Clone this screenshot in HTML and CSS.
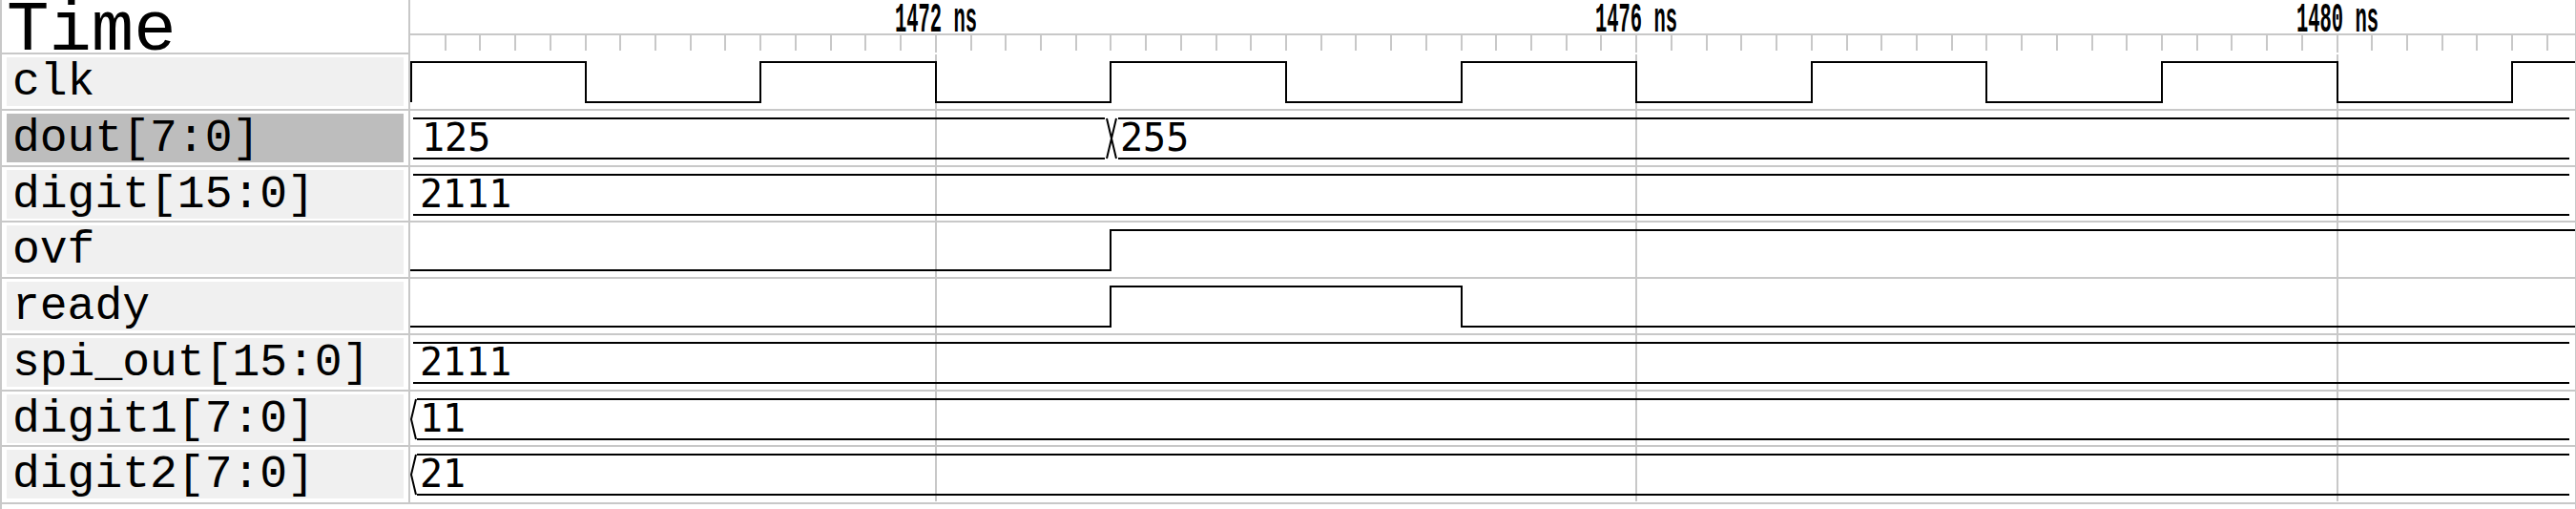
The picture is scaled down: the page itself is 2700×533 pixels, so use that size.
FILE: index.html
```html
<!DOCTYPE html>
<html lang="en">

<head>
    <meta charset="UTF-8">
    <meta name="viewport" content="width=device-width, initial-scale=1.0">
    <title>Waveform</title>
    <link rel="stylesheet" href="styles.css">
</head>

<body>
    <div class="viewer">
        <div class="signal-row header-row">
            <div class="name-cell"><span class="time-title">Time</span></div>
            <div class="wave-cell">
                <svg class="wave ruler" width="2269" height="55">
                    <path class="tick" d="M0 36H2269" />
                    <path class="tick" d="M37 36v17M73 36v17M110 36v17M147 36v17M184 36v17M220 36v17M257 36v17M294 36v17M330 36v17M367 36v17M404 36v17M441 36v17M477 36v17M514 36v17M551 36v17M588 36v17M624 36v17M661 36v17M698 36v17M734 36v17M771 36v17M808 36v17M845 36v17M881 36v17M918 36v17M955 36v17M991 36v17M1028 36v17M1065 36v17M1102 36v17M1138 36v17M1175 36v17M1212 36v17M1248 36v17M1285 36v17M1322 36v17M1359 36v17M1395 36v17M1432 36v17M1469 36v17M1506 36v17M1542 36v17M1579 36v17M1616 36v17M1652 36v17M1689 36v17M1726 36v17M1763 36v17M1799 36v17M1836 36v17M1873 36v17M1909 36v17M1946 36v17M1983 36v17M2020 36v17M2056 36v17M2093 36v17M2130 36v17M2166 36v17M2203 36v17M2240 36v17" />
                    <path class="grid" d="M551 36V55M1285 36V55M2020 36V55" />
                    <text class="ruler-label" x="551" y="33" textLength="86" lengthAdjust="spacingAndGlyphs">1472 ns</text>
                    <text class="ruler-label" x="1285" y="33" textLength="86" lengthAdjust="spacingAndGlyphs">1476 ns</text>
                    <text class="ruler-label" x="2020" y="33" textLength="86" lengthAdjust="spacingAndGlyphs">1480 ns</text>
                </svg>
            </div>
        </div>

        <div class="signal-row first">
            <div class="name-cell"><div class="name">clk</div></div>
            <div class="wave-cell">
                <svg class="wave">
                    <path class="grid" d="M551 0V60M1285 0V60M2020 0V60" />
                    <path class="trace" d="M1 50V8H184V50H367V8H551V50H734V8H918V50H1102V8H1285V50H1469V8H1652V50H1836V8H2020V50H2203V8H2269" />
                </svg>
            </div>
        </div>

        <div class="signal-row">
            <div class="name-cell"><div class="name selected">dout[7:0]</div></div>
            <div class="wave-cell">
                <svg class="wave">
                    <path class="grid" d="M551 0V60M1285 0V60M2020 0V60" />
                    <path class="trace" d="M3 8H728M742 8H2263M3 50H728M742 50H2263M730 8L740 50M740 8L730 50" />
                    <text class="value" x="12" y="42">125</text>
                    <text class="value" x="744" y="42">255</text>
                </svg>
            </div>
        </div>

        <div class="signal-row">
            <div class="name-cell"><div class="name">digit[15:0]</div></div>
            <div class="wave-cell">
                <svg class="wave">
                    <path class="grid" d="M551 0V60M1285 0V60M2020 0V60" />
                    <path class="trace" d="M3 8H2263M3 50H2263" />
                    <text class="value" x="10" y="42">2111</text>
                </svg>
            </div>
        </div>

        <div class="signal-row">
            <div class="name-cell"><div class="name">ovf</div></div>
            <div class="wave-cell">
                <svg class="wave">
                    <path class="grid" d="M551 0V60M1285 0V60M2020 0V60" />
                    <path class="trace" d="M0 50H734V8H2269" />
                </svg>
            </div>
        </div>

        <div class="signal-row">
            <div class="name-cell"><div class="name">ready</div></div>
            <div class="wave-cell">
                <svg class="wave">
                    <path class="grid" d="M551 0V60M1285 0V60M2020 0V60" />
                    <path class="trace" d="M0 50H734V8H1102V50H2269" />
                </svg>
            </div>
        </div>

        <div class="signal-row">
            <div class="name-cell"><div class="name">spi_out[15:0]</div></div>
            <div class="wave-cell">
                <svg class="wave">
                    <path class="grid" d="M551 0V60M1285 0V60M2020 0V60" />
                    <path class="trace" d="M3 8H2263M3 50H2263" />
                    <text class="value" x="10" y="42">2111</text>
                </svg>
            </div>
        </div>

        <div class="signal-row">
            <div class="name-cell"><div class="name">digit1[7:0]</div></div>
            <div class="wave-cell">
                <svg class="wave">
                    <path class="grid" d="M551 0V60M1285 0V60M2020 0V60" />
                    <path class="trace" d="M7 8H2263M7 50H2263M6 8L1 29L6 50" />
                    <text class="value" x="10" y="42">11</text>
                </svg>
            </div>
        </div>

        <div class="signal-row last">
            <div class="name-cell"><div class="name">digit2[7:0]</div></div>
            <div class="wave-cell">
                <svg class="wave">
                    <path class="grid" d="M551 0V60M1285 0V60M2020 0V60" />
                    <path class="trace" d="M7 8H2263M7 50H2263M6 8L1 29L6 50" />
                    <text class="value" x="10" y="42">21</text>
                </svg>
            </div>
        </div>
    </div>
</body>

</html>
```

FILE: styles.css
```css
* {
    margin: 0;
    padding: 0;
    box-sizing: border-box;
}

body {
    background-color: #fff;
    font-family: "Liberation Mono", monospace;
    color: #000;
}

.viewer {
    width: 2700px;
    min-height: 100vh;
    border-left: 2px solid #c8c8c8;
    border-right: 1px solid #c8c8c8;
}

.signal-row {
    display: grid;
    grid-template-columns: 428px 2269px;
    height: 58.75px;
}

.header-row {
    height: 55px;
}

.signal-row.last {
    height: 60.75px;
}

.name-cell {
    display: flex;
    border-top: 2px solid #c8c8c8;
    border-right: 2px solid #c8c8c8;
    padding: 3px 5px 4px 5px;
}

.header-row .name-cell {
    border-top: none;
    padding: 0 5px;
}

.wave-cell {
    border-top: 2px solid #c8c8c8;
}

.first .wave-cell {
    border-top-color: transparent;
}

.header-row .wave-cell {
    border-top: none;
}

.last .name-cell,
.last .wave-cell {
    border-bottom: 2px solid #c8c8c8;
}

.time-title {
    display: block;
    font-size: 74px;
    line-height: 46px;
    padding-top: 9px;
    height: 55px;
}

.name {
    flex: 1;
    background-color: #f0f0f0;
    font-size: 48px;
    line-height: 49px;
    padding: 2px 0 0 6px;
    white-space: nowrap;
}

.name.selected {
    background-color: #bdbdbd;
}

.wave {
    display: block;
    width: 2269px;
    height: 56.75px;
    overflow: hidden;
}

.ruler {
    height: 55px;
}

.wave .tick {
    stroke: #c8c8c8;
    stroke-width: 2;
    fill: none;
}

.wave .grid {
    stroke: #c8c8c8;
    stroke-width: 2;
    fill: none;
}

.wave .trace {
    stroke: #000;
    stroke-width: 2;
    fill: none;
}

.ruler-label {
    font-family: "Liberation Mono", monospace;
    font-weight: bold;
    font-size: 44px;
    text-anchor: middle;
    fill: #000;
}

.value {
    font-family: "DejaVu Sans Mono", monospace;
    font-size: 40px;
    fill: #000;
}
```
